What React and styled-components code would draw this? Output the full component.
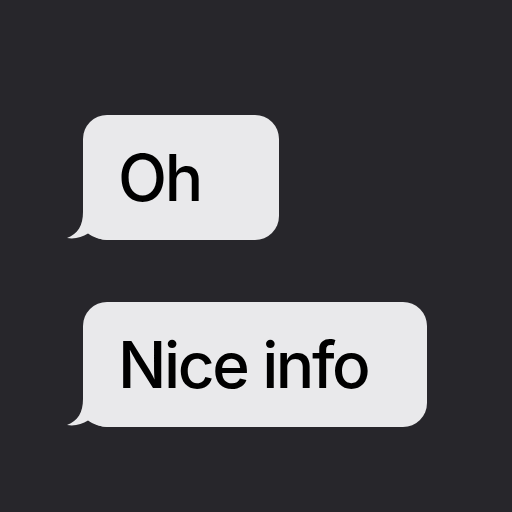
import React from "react";
import styled, { createGlobalStyle } from "styled-components";

const GlobalStyle = createGlobalStyle`
  html, body {
    margin: 0;
    padding: 0;
    background: #27262b;
  }
  body {
    font-family: Inter, "Liberation Sans", Arial, sans-serif;
  }
`;

const Screen = styled.div`
  width: 512px;
  height: 512px;
  background: #27262b;
  display: flex;
  flex-direction: column;
  align-items: flex-start;
  gap: 62px;
  padding: 115px 0 0 83px;
  box-sizing: border-box;
`;

const Bubble = styled.div`
  position: relative;
  width: ${p => p.width}px;
  height: 125px;
  box-sizing: border-box;
  padding: 0 0 0 35px;
  display: flex;
  align-items: center;
  background: #e9e9eb;
  border-radius: 24px;
  color: #000;
  font-size: 64px;
  font-weight: 500;
  letter-spacing: -2.4px;
  white-space: nowrap;
`;

const Tail = styled.svg`
  position: absolute;
  left: -16px;
  bottom: 0;
  width: 44px;
  height: 32px;
`;

const BubbleTail = () => (
  <Tail viewBox="0 0 44 32">
    <path
      d="M16 0 L16 4 C16 17 11 26 0 30 C8 31.5 15 29 21 25.5 C26 29 32 32 44 32 L44 0 Z"
      fill="#e9e9eb"
    />
  </Tail>
);

const messages = [
  { text: "Oh", width: 196 },
  { text: "Nice info", width: 344 }
];

const App = () => {
  return (
    <>
      <GlobalStyle />
      <Screen>
        {messages.map(msg => (
          <Bubble key={msg.text} width={msg.width}>
            {msg.text}
            <BubbleTail />
          </Bubble>
        ))}
      </Screen>
    </>
  );
};

export default App;
